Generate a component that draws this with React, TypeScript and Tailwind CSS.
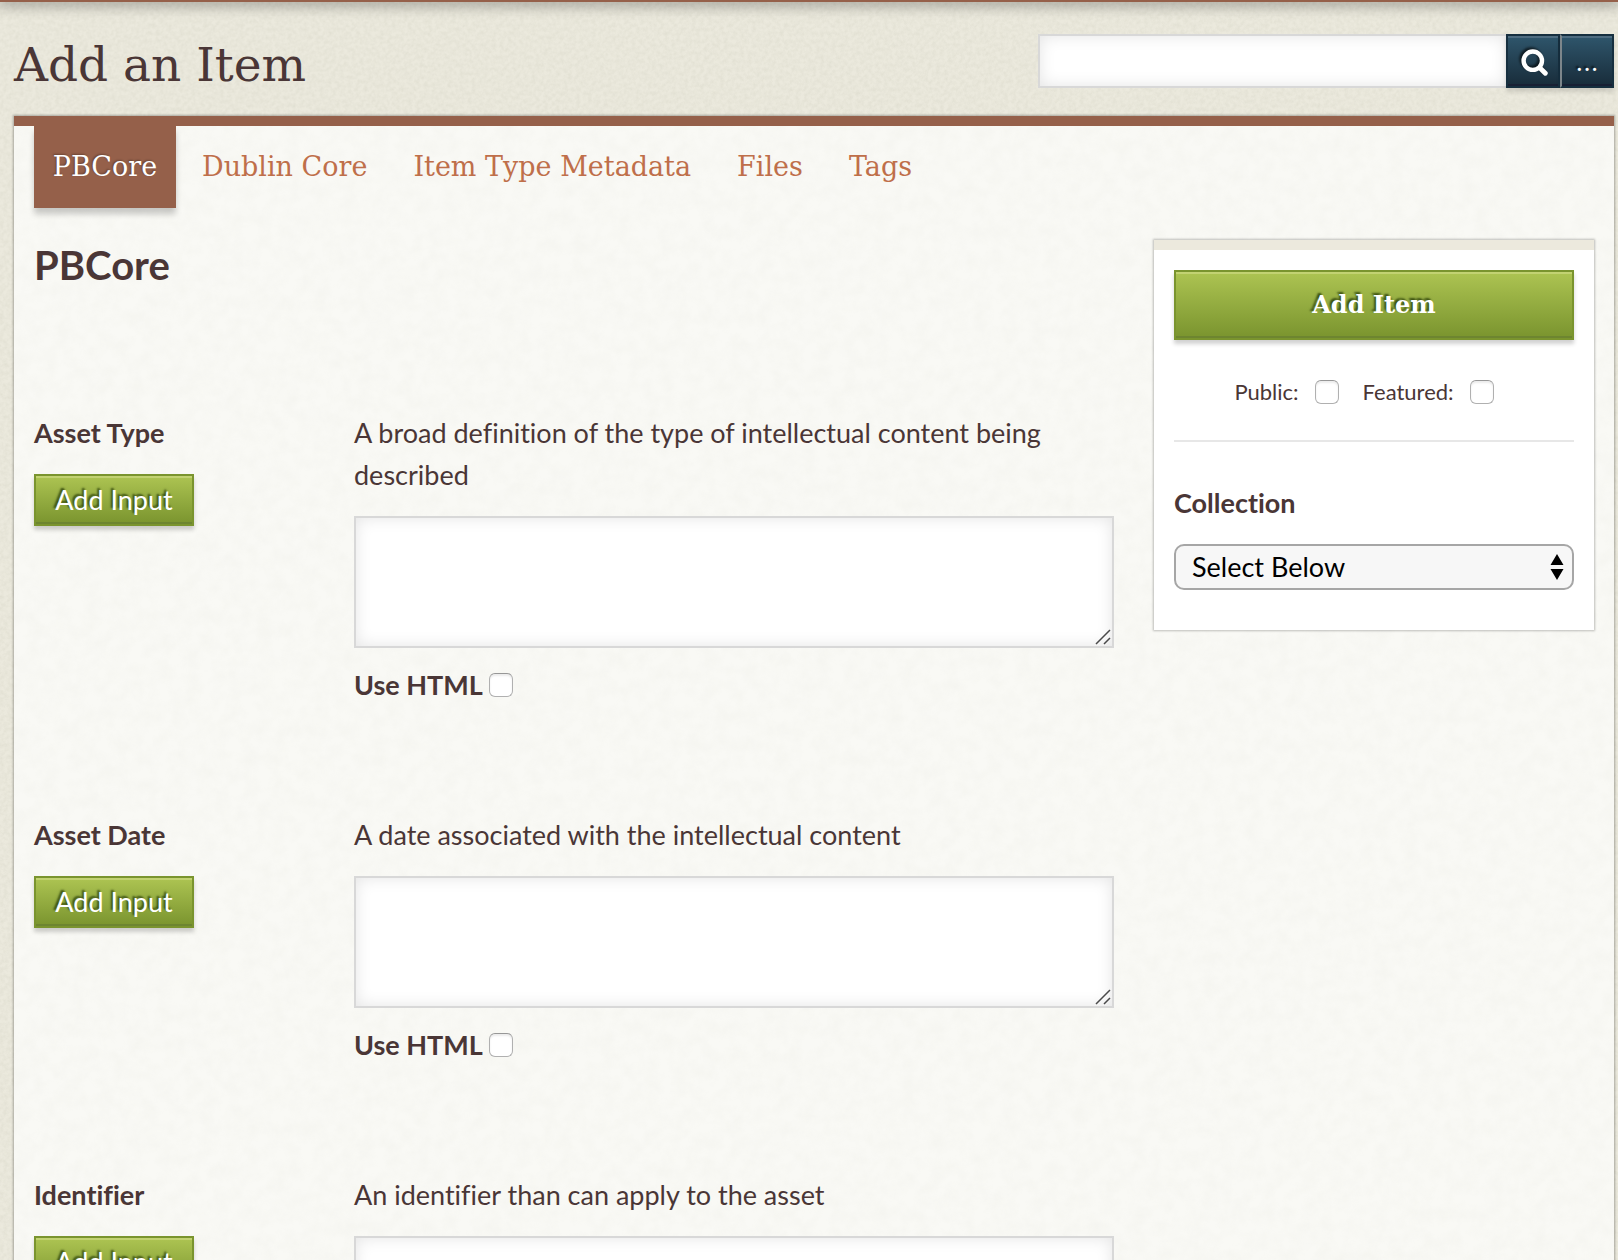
import { useId } from "react";

const SANS = "font-['Lato','Open_Sans',sans-serif]";
const SLAB = "font-['DejaVu_Serif',serif]";
const GREEN_BUTTON =
  "border-2 border-[#7a942e] bg-linear-to-b from-[#adc452] to-[#7a942e] text-white [text-shadow:-2px_-2px_2px_rgba(30,50,0,0.75)] shadow-[inset_0_2px_0_#c2d272,inset_0_-2px_0_#6d8530,0_4px_4px_rgba(0,0,0,0.18)]";
const BLUE_BUTTON =
  "flex h-[54px] items-center justify-center border-2 border-[#162f3f] bg-linear-to-b from-[#2f566c] to-[#182c3a] text-white shadow-[inset_0_2px_0_#4e6c80,inset_0_-2px_0_#182034,0_4px_4px_rgba(0,0,0,0.12)]";
const FIELD =
  "block border-2 border-[#d8d8d8] bg-white text-[27px] shadow-[inset_0_0_16px_rgba(0,0,0,0.11)] outline-none";

const tabs = ["Dublin Core", "Item Type Metadata", "Files", "Tags"];

const fields = [
  { name: "Asset Type", text: "A broad definition of the type of intellectual content being described" },
  { name: "Asset Date", text: "A date associated with the intellectual content" },
  { name: "Identifier", text: "An identifier than can apply to the asset" },
];

function PaperTexture({ frequency, opacity }: { frequency: number; opacity: number }) {
  const id = useId();
  return (
    <svg aria-hidden="true" className="pointer-events-none absolute inset-0 h-full w-full">
      <filter id={id}>
        <feTurbulence type="fractalNoise" baseFrequency={frequency} numOctaves={3} stitchTiles="stitch" />
        <feColorMatrix values="0 0 0 0 0.45  0 0 0 0 0.45  0 0 0 0 0.35  1.6 0 0 0 -0.5" />
      </filter>
      <rect width="100%" height="100%" filter={`url(#${id})`} opacity={opacity} />
    </svg>
  );
}

function Checkbox({ id }: { id: string }) {
  return (
    <input
      id={id}
      type="checkbox"
      className="size-6 appearance-none rounded-md border border-[#b0b0b0] border-t-[#979797] bg-white shadow-[inset_0_2px_2px_rgba(0,0,0,0.08)] checked:bg-[#95604a]"
    />
  );
}

function ElementField({ name, text }: { name: string; text: string }) {
  const id = useId();
  return (
    <section className="flex">
      <div className="w-[320px] shrink-0">
        <label htmlFor={`${id}-text`} className="block font-bold">
          {name}
        </label>
        <button type="button" className={`${GREEN_BUTTON} mt-5 h-[52px] w-40 leading-[46px] whitespace-nowrap`}>
          Add Input
        </button>
      </div>
      <div className="min-w-0 flex-1">
        <p>{text}</p>
        <div className="relative mt-5">
          <textarea id={`${id}-text`} className={`${FIELD} h-[132px] w-full resize-none p-2`} />
          <svg
            aria-hidden="true"
            viewBox="0 0 16 16"
            className="pointer-events-none absolute right-[3px] bottom-[3px] size-4"
            fill="none"
            stroke="#4a4a4a"
            strokeWidth="1.5"
          >
            <path d="M1 15 15 1M9 15l6-6" />
          </svg>
        </div>
        <label htmlFor={`${id}-html`} className="mt-4 flex items-center gap-1.5 font-bold">
          Use HTML
          <Checkbox id={`${id}-html`} />
        </label>
      </div>
    </section>
  );
}

export default function App() {
  return (
    <div
      className={`${SANS} relative flex min-h-screen flex-col bg-[#ebe9dd] text-[27px] leading-[42px] text-[#4a3636] [font-variant-ligatures:none]`}
    >
      <PaperTexture frequency={0.25} opacity={0.17} />
      <div className="relative h-0.5 bg-[#95604a] shadow-[0_0_14px_2px_rgba(0,0,0,0.55)]" />

      <header className="relative flex items-start justify-between pt-8 pr-1 pl-3.5">
        <h1 className={`${SLAB} text-[47px] leading-[62px]`}>Add an Item</h1>
        <form role="search" className="flex w-[576px]" onSubmit={(e) => e.preventDefault()}>
          <input type="search" aria-label="Search" className={`${FIELD} h-[54px] min-w-0 flex-1 border-r-0 px-3`} />
          <button type="submit" aria-label="Submit search" className={`${BLUE_BUTTON} w-[54px]`}>
            <svg
              aria-hidden="true"
              viewBox="0 0 30 30"
              className="size-[30px] shrink-0 drop-shadow-[-2px_-2px_1px_rgba(0,0,0,0.6)]"
              fill="none"
              stroke="currentColor"
            >
              <circle cx="14.8" cy="14.7" r="9.2" strokeWidth="4.4" />
              <path d="m22 22 5.3 5.3" strokeWidth="4.8" strokeLinecap="round" />
            </svg>
          </button>
          <button
            type="button"
            aria-label="Advanced search options"
            className={`${BLUE_BUTTON} ${SLAB} w-[54px] border-l-[#7d868b] pt-1 text-[24px] [text-shadow:-2px_-2px_2px_rgba(0,0,0,0.6)]`}
          >
            ...
          </button>
        </form>
      </header>

      <main className="relative mt-5 mr-1 ml-3.5 flex-1 border-t-10 border-[#95604a] bg-[#f9f9f5] px-5 pb-10 shadow-[0_0_2px_1px_rgba(0,0,0,0.28)]">
        <PaperTexture frequency={0.07} opacity={0.05} />

        <nav className={`${SLAB} relative flex leading-[82px]`}>
          <a
            href="#pbcore"
            className="w-[142px] bg-[#95604a] text-center text-white shadow-[0_6px_6px_rgba(0,0,0,0.2)] [text-shadow:-1px_-1px_2px_rgba(0,0,0,0.3)]"
          >
            PBCore
          </a>
          <div className="ml-[26px] flex gap-[46px] text-[#bf6f4a]">
            {tabs.map((tab) => (
              <a key={tab} href={`#${tab.toLowerCase().replaceAll(" ", "-")}`}>
                {tab}
              </a>
            ))}
          </div>
        </nav>

        <div className="relative mt-8 flex items-start gap-10">
          <div className="min-w-0 flex-1">
            <h2 className="pb-[122px] text-[40px] leading-[50px] font-bold">PBCore</h2>
            <div className="flex flex-col gap-[108px]">
              {fields.map((field) => (
                <ElementField key={field.name} {...field} />
              ))}
            </div>
          </div>

          <aside className="w-[440px] shrink-0 border-t-10 border-[#ece9dd] bg-white px-5 pt-5 pb-10 shadow-[0_0_2px_1px_rgba(0,0,0,0.24)]">
            <button type="submit" className={`${GREEN_BUTTON} ${SLAB} h-[70px] w-full text-[24px] font-bold`}>
              Add Item
            </button>
            <div className="flex items-center justify-center border-b-2 border-[#e7e7e7] pt-8 pr-5 pb-7 text-[22px] leading-10">
              <label htmlFor="public">Public:</label>
              <span className="mr-6 ml-4 flex">
                <Checkbox id="public" />
              </span>
              <label htmlFor="featured">Featured:</label>
              <span className="ml-4 flex">
                <Checkbox id="featured" />
              </span>
            </div>
            <label htmlFor="collection" className="mt-10 block font-bold">
              Collection
            </label>
            <div className="relative mt-5">
              <select
                id="collection"
                className="h-[46px] w-full appearance-none rounded-[10px] border-2 border-[#a6a6a6] bg-[#f7f7f7] px-4 leading-[42px] text-black"
              >
                <option>Select Below</option>
              </select>
              <svg
                aria-hidden="true"
                viewBox="0 0 14 26"
                className="pointer-events-none absolute top-2.5 right-2.5 h-[26px] w-3.5"
              >
                <path d="M7 0 13.5 11H.5zM7 26 .5 15h13z" fill="#000" />
              </svg>
            </div>
          </aside>
        </div>
      </main>
    </div>
  );
}
